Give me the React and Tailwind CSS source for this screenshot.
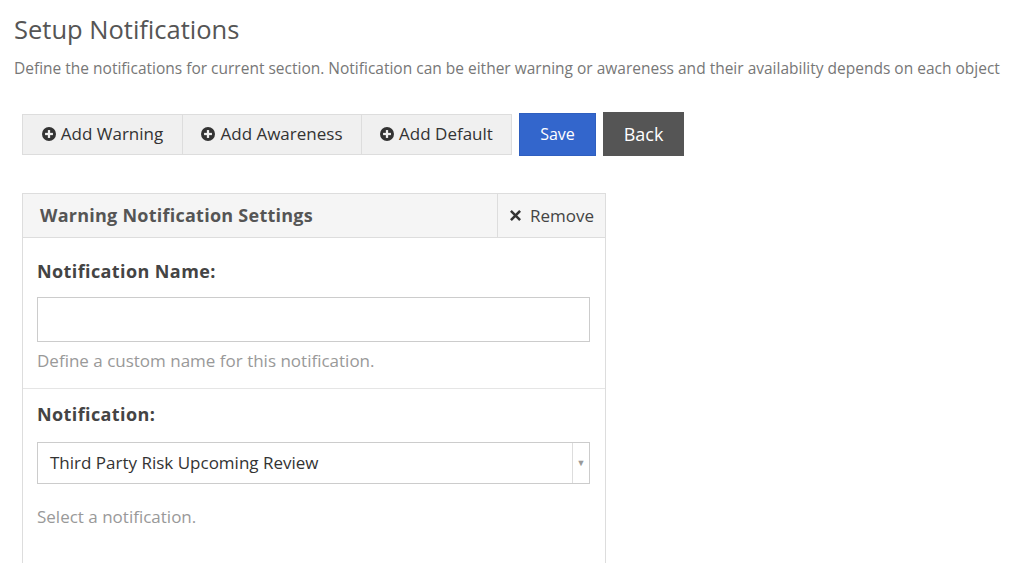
import React from 'react';

function PlusCircle() {
  return (
    <svg viewBox="0 0 16 16" className="w-[14px] h-[14px] mr-[5px]">
      <circle cx="8" cy="8" r="8" fill="#333" />
      <rect x="3.5" y="6.7" width="9" height="2.6" fill="#f0f0f0" />
      <rect x="6.7" y="3.5" width="2.6" height="9" fill="#f0f0f0" />
    </svg>
  );
}

function Times() {
  return (
    <svg viewBox="0 0 12 12" className="w-[11px] h-[11px] mr-[9px]">
      <path d="M2 2 L10 10 M10 2 L2 10" stroke="#333" strokeWidth="2.8" strokeLinecap="square" />
    </svg>
  );
}

export default function App() {
  return (
    <div className="w-[1024px] h-[563px] overflow-hidden bg-white font-['Open_Sans',sans-serif]">
      <div className="pl-[14px] pt-[12px]">
        <h1 className="text-[25.5px] leading-[34px] text-[#555]">Setup Notifications</h1>
        <p className="mt-[11px] text-[15.5px] leading-[22px] text-[#777]">
          Define the notifications for current section. Notification can be either warning or awareness and their availability depends on each object
        </p>
      </div>

      <div className="flex items-center ml-[22px] mt-[33px]">
        <div className="flex border border-[#ddd] bg-[#f0f0f0]">
          <button className="flex items-center justify-center w-[159px] h-[39px] text-[17px] text-[#333]">
            <PlusCircle />Add Warning
          </button>
          <button className="flex items-center justify-center w-[179px] h-[39px] text-[17px] text-[#333] border-l border-[#ddd]">
            <PlusCircle />Add Awareness
          </button>
          <button className="flex items-center justify-center w-[150px] h-[39px] text-[17px] text-[#333] border-l border-[#ddd]">
            <PlusCircle />Add Default
          </button>
        </div>
        <button className="ml-[7px] w-[77px] h-[43px] bg-[#3366cc] text-white text-[16px] border border-[#2f5fbf]">Save</button>
        <button className="ml-[7px] w-[81px] h-[44px] bg-[#555] text-white text-[18px]">Back</button>
      </div>

      <div className="ml-[22px] mt-[37px] w-[584px] border border-[#ddd]">
        <div className="flex items-stretch h-[44px] bg-[#f5f5f5] border-b border-[#ddd]">
          <div className="flex-1 flex items-center pl-[17px] text-[18px] tracking-[0.25px] font-bold text-[#555]">
            Warning Notification Settings
          </div>
          <button className="flex items-center w-[108px] pl-[12px] border-l border-[#ddd] text-[17px] text-[#444]">
            <Times />Remove
          </button>
        </div>

        <div className="px-[14px] pt-[21px] pb-[15px] border-b border-[#e5e5e5]">
          <label className="block text-[18px] tracking-[0.4px] font-bold text-[#444] leading-[24px]">Notification Name:</label>
          <input type="text" className="block mt-[14px] w-[553px] h-[45px] border border-[#ccc] bg-white" />
          <p className="mt-[7px] text-[17px] text-[#999] leading-[24px]">Define a custom name for this notification.</p>
        </div>

        <div className="px-[14px] pt-[13px] pb-[60px]">
          <label className="block text-[18px] tracking-[0.4px] font-bold text-[#444] leading-[24px]">Notification:</label>
          <div className="flex mt-[16px] w-[553px] h-[42px] border border-[#ccc] bg-white">
            <div className="flex-1 flex items-center pl-[12px] text-[17px] text-[#333]">Third Party Risk Upcoming Review</div>
            <div className="flex items-center justify-center w-[17px] border-l border-[#ddd] text-[#999] text-[9px]">▼</div>
          </div>
          <p className="mt-[21px] text-[17px] text-[#999] leading-[24px]">Select a notification.</p>
        </div>
      </div>
    </div>
  );
}
